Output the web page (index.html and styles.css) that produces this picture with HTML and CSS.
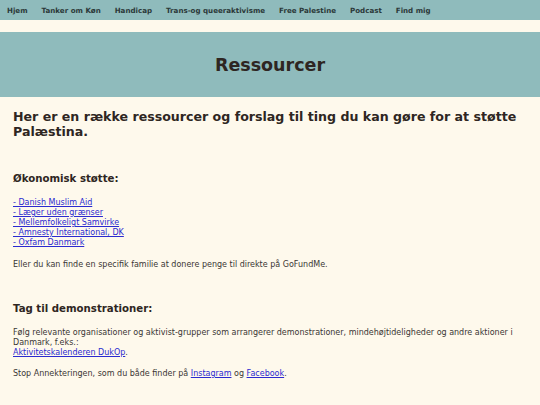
FILE: index.html
```html
<!DOCTYPE html>
<html lang="da">
<head>
<meta charset="utf-8">
<title>Ressourcer</title>
<link rel="stylesheet" href="styles.css">
</head>
<body>
<nav class="topnav">
  <a href="#">Hjem</a>
  <a href="#">Tanker om Køn</a>
  <a href="#">Handicap</a>
  <a href="#">Trans-og queeraktivisme</a>
  <a href="#">Free Palestine</a>
  <a href="#">Podcast</a>
  <a href="#">Find mig</a>
</nav>
<div class="strip"></div>
<header class="banner">
  <h1>Ressourcer</h1>
</header>
<main class="content">
  <h2 class="intro">Her er en række ressourcer og forslag til ting du kan gøre for at støtte Palæstina.</h2>

  <h3>Økonomisk støtte:</h3>
  <p class="links">
    <a href="#">- Danish Muslim Aid</a><br>
    <a href="#">- Læger uden grænser</a><br>
    <a href="#">- Mellemfolkeligt Samvirke</a><br>
    <a href="#">- Amnesty International, DK</a><br>
    <a href="#">- Oxfam Danmark</a>
  </p>
  <p>Eller du kan finde en specifik familie at donere penge til direkte på GoFundMe.</p>

  <h3>Tag til demonstrationer:</h3>
  <p>Følg relevante organisationer og aktivist-grupper som arrangerer demonstrationer, mindehøjtideligheder og andre aktioner i Danmark, f.eks.:<br><a href="#">Aktivitetskalenderen DukOp</a>.</p>
  <p>Stop Annekteringen, som du både finder på <a href="#">Instagram</a> og <a href="#">Facebook</a>.</p>
</main>
</body>
</html>
```
FILE: styles.css
```css
body {
  margin: 0;
  background: #fef9ec;
  font-family: "DejaVu Sans", Verdana, sans-serif;
  color: #3a3634;
}
.topnav {
  display: flex;
  align-items: center;
  height: 20px;
  background: #8fbbbc;
  padding-left: 7px;
  gap: 14px;
}
.topnav a {
  font-size: 7.1px;
  font-weight: bold;
  color: #2b3838;
  text-decoration: none;
}
.strip {
  height: 12px;
}
.banner {
  background: #8fbbbc;
  height: 65px;
  display: flex;
  align-items: center;
  justify-content: center;
}
.banner h1 {
  margin: 0;
  font-size: 17.5px;
  color: #2e2622;
}
.content {
  padding: 0 13px;
}
.intro {
  font-size: 12.6px;
  line-height: 15px;
  margin: 12px 0 34px;
  color: #2e2622;
}
h3 {
  font-size: 10.2px;
  margin: 0 0 14px;
  color: #2e2622;
}
p {
  font-size: 8px;
  line-height: 10px;
  margin: 0 0 11px;
}
.content .links {
  margin-bottom: 12px;
}
.content p + h3 {
  margin-top: 33px;
}
a {
  color: #2a2ad0;
}
```
